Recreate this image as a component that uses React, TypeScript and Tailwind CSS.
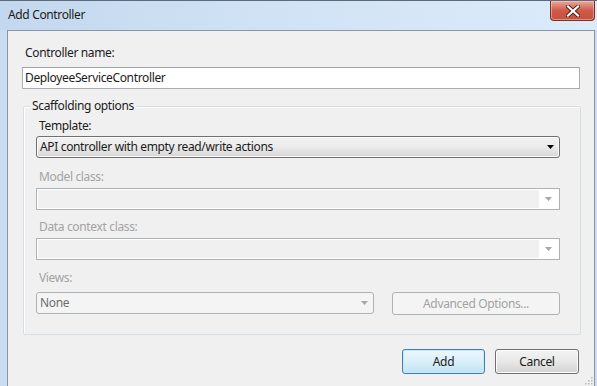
import React from "react";

const font = "font-['Noto_Sans','Open_Sans',sans-serif] text-[12px] leading-[16px] tracking-[-0.35px]";

const Arrow = ({ dim }: { dim?: boolean }) => (
  <svg width="7" height="4" viewBox="0 0 7 4" className="block">
    <path d="M0 0H7L3.5 4Z" fill={dim ? "#a7a7a7" : "#000"} />
  </svg>
);

// disabled editable combo box (Model class / Data context class)
const DisabledCombo = () => (
  <div className="flex h-[22px] w-[524px] border border-[#adb2b5] bg-white p-px">
    <div className="flex-1 bg-[#f0f0f0]" />
    <div className="flex w-[19px] items-center justify-center">
      <Arrow dim />
    </div>
  </div>
);

export default function App() {
  return (
    <div className={`relative flex h-[386px] w-[597px] flex-col overflow-hidden bg-[#c9dcf0] ${font} text-[#1b1b1b]`}>
      {/* Title bar */}
      <div className="flex h-[30px] shrink-0 items-start justify-between border-t border-[#5b6b7c] bg-gradient-to-r from-[#c3d8ee] via-[#d2e3f5] to-[#dcebfa]">
        <span className="mt-[6px] ml-[8px] text-[12px]">Add Controller</span>
        <div className="mr-[2px] flex h-[20px] w-[45px] items-center justify-center rounded-b-[4px] border border-t-0 border-[#7a2d22] bg-gradient-to-b from-[#e9a99c] via-[#cf5a49] to-[#c8503c] shadow-[inset_0_0_0_1px_rgba(255,210,200,0.5)]">
          <svg width="14" height="12" viewBox="0 0 14 12">
            <path d="M2 1.5L12 10.5M12 1.5L2 10.5" stroke="#4a1d16" strokeWidth="4" strokeLinecap="square" />
            <path d="M2 1.5L12 10.5M12 1.5L2 10.5" stroke="#fff" strokeWidth="2.2" strokeLinecap="square" />
          </svg>
        </div>
      </div>

      {/* Client area */}
      <div className="relative ml-[7px] mr-[2px] flex flex-1 flex-col border border-b-0 border-[#8398ad] bg-[#f0f0f0] pl-[14px]">
        <div className="mt-[14px] ml-[3px]">Controller name:</div>
        <div className="mt-[6px] flex h-[22px] w-[558px] items-center border border-[#abadb3] border-t-[#a0a3aa] bg-white pl-[2px]">
          DeployeeServiceController
        </div>

        {/* Scaffolding options group */}
        <div className="relative mt-[17px] ml-px h-[229px] w-[558px] rounded-[2px] border border-[#d5dfe5] pl-[12px] pt-[11px] shadow-[inset_1px_1px_0_#fff]">
          <span className="absolute -top-[9px] left-[6px] bg-[#f0f0f0] px-[2px]">Scaffolding options</span>

          <div className="ml-[3px]">Template:</div>
          <div className="mt-[2px] flex h-[22px] w-[524px] items-center justify-between rounded-[3px] border border-[#707070] bg-gradient-to-b from-[#f2f2f2] via-[#ebebeb] to-[#d6d6d6] pl-[3px] pr-[5px] shadow-[inset_0_0_0_1px_#fbfbfb]">
            <span>API controller with empty read/write actions</span>
            <Arrow />
          </div>

          <div className="mt-[11px] ml-[3px] text-[#a3a3a3]">Model class:</div>
          <div className="mt-[3px]">
            <DisabledCombo />
          </div>

          <div className="mt-[9px] ml-[3px] text-[#a3a3a3]">Data context class:</div>
          <div className="mt-[3px]">
            <DisabledCombo />
          </div>

          <div className="mt-[10px] ml-[3px] text-[#a3a3a3]">Views:</div>
          <div className="mt-[6px] flex items-start gap-[18px]">
            <div className="flex h-[22px] w-[338px] items-center justify-between rounded-[3px] border border-[#adb2b5] bg-[#f4f4f4] pl-[3px] pr-[5px] text-[#6d6d6d]">
              <span>None</span>
              <Arrow dim />
            </div>
            <div className="flex h-[23px] w-[168px] items-center justify-center rounded-[3px] border border-[#adb2b5] bg-[#f4f4f4] text-[#a3a3a3]">
              Advanced Options...
            </div>
          </div>
        </div>

        {/* Buttons */}
        <div className="mt-[14px] flex w-[557px] justify-end gap-[10px]">
          <div className="flex h-[25px] w-[83px] items-center justify-center rounded-[3px] border border-[#3c7fb1] bg-gradient-to-b from-[#ecf7fd] via-[#dceff9] to-[#bfe3f6] shadow-[inset_0_0_0_1px_#c5eafc]">
            Add
          </div>
          <div className="flex h-[25px] w-[84px] items-center justify-center rounded-[3px] border border-[#707070] bg-gradient-to-b from-[#f3f3f3] via-[#e8e8e8] to-[#d2d2d2] shadow-[inset_0_0_0_1px_#fcfcfc]">
            Cancel
          </div>
        </div>

        {/* Size grip */}
        <svg className="absolute right-[1px] bottom-[1px]" width="8" height="8" viewBox="0 0 8 8">
          <rect x="6" y="0" width="1.5" height="1.5" fill="#b8b8b8" />
          <rect x="3" y="3" width="1.5" height="1.5" fill="#b8b8b8" />
          <rect x="6" y="3" width="1.5" height="1.5" fill="#b8b8b8" />
          <rect x="0" y="6" width="1.5" height="1.5" fill="#b8b8b8" />
          <rect x="3" y="6" width="1.5" height="1.5" fill="#b8b8b8" />
          <rect x="6" y="6" width="1.5" height="1.5" fill="#b8b8b8" />
        </svg>
      </div>
    </div>
  );
}
